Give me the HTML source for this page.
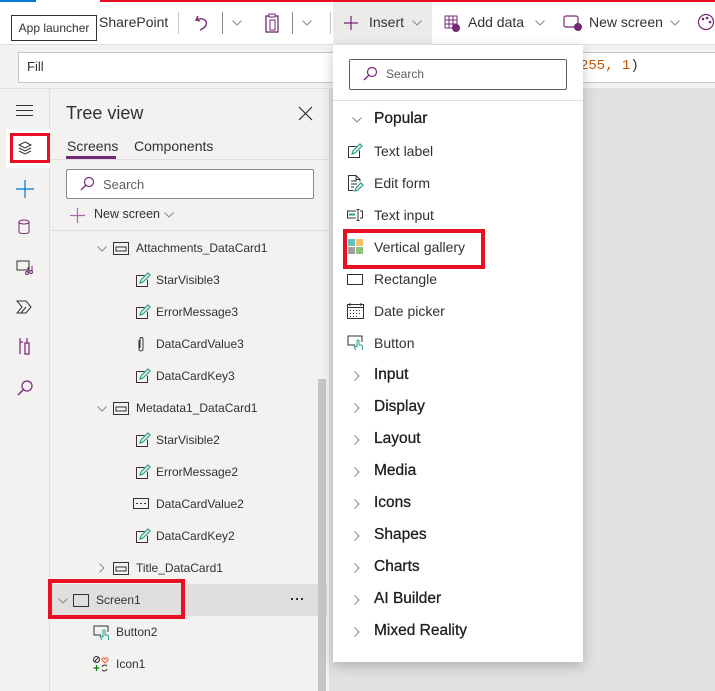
<!DOCTYPE html>
<html><head><meta charset="utf-8"><style>
*{box-sizing:border-box;margin:0;padding:0}
body{width:715px;height:691px;overflow:hidden;position:relative;background:#e1e1e1;font-family:"Segoe UI","Liberation Sans",sans-serif;color:#323130;font-size:13px}
.abs{position:absolute}
.top{left:0;top:0;width:715px;height:45px;background:#fff;border-bottom:1px solid #e1dfdd}
.fbar{left:0;top:45px;width:715px;height:44px;background:#f3f2f1;border-bottom:1px solid #e1dfdd}
.rail{left:0;top:89px;width:50px;height:602px;background:#f3f2f1;border-right:1px solid #e1dfdd}
.tree{left:50px;top:89px;width:280px;height:602px;background:#f3f2f1;border-right:1px solid #e1dfdd}
.row{position:absolute;height:20px;line-height:20px;font-size:12px;color:#323130;white-space:nowrap}
.menu{left:333px;top:45px;width:250px;height:617px;background:#fff;box-shadow:0 4px 12px rgba(0,0,0,.22)}
.mi{position:absolute;left:41px;font-size:14px;line-height:20px;color:#323130}
.mh{position:absolute;left:41px;font-size:15.5px;line-height:20px;color:#201f1e;-webkit-text-stroke:0.3px #201f1e}
.red{position:absolute;border:4px solid #e81123}
svg{position:absolute;overflow:visible}
</style></head><body>
<svg width="0" height="0"><defs>
<symbol id="cd" viewBox="0 0 10 6"><path d="M0.5 0.5L5 5 9.5 0.5" fill="none" stroke="#8a8886" stroke-width="1"/></symbol>
<symbol id="cr" viewBox="0 0 6 10"><path d="M0.5 0.5L5 5 0.5 9.5" fill="none" stroke="#8a8886" stroke-width="1"/></symbol>
<symbol id="pen" viewBox="0 0 16 16"><path d="M1.5 3.5h8M1.5 3.5v11h11v-7" fill="none" stroke="#323130"/><path d="M5 11l1-3 7-7 2 2-7 7z" fill="none" stroke="#2a9d8f" stroke-width="1.2"/></symbol>
<symbol id="card" viewBox="0 0 16 13"><rect x="0.5" y="0.5" width="15" height="12" fill="none" stroke="#323130"/><rect x="3" y="5" width="10" height="4" fill="none" stroke="#323130"/></symbol>
</defs></svg>
<div class="abs" style="left:0;top:0;width:36px;height:2px;background:#0078d4;z-index:5"></div>
<div class="abs" style="left:100px;top:0;width:615px;height:2px;background:#e81123;z-index:5"></div>
<div class="abs top">
 <div class="abs" style="left:11px;top:15px;width:86px;height:26px;border:1px solid #323130;background:#fff;font-size:12px;line-height:24px;text-align:center">App launcher</div>
 <div class="abs" style="left:99px;top:14px;font-size:14px">SharePoint</div>
 <div class="abs" style="left:178px;top:12px;width:1px;height:22px;background:#c8c6c4"></div>
 <svg style="left:194px;top:14px" width="16" height="18"><path d="M4 2 L2 6 L6 7 M2 6 C8 3 14 6 12 11 C11 14 8 15 6 16" fill="none" stroke="#742774" stroke-width="1.4"/></svg>
 <div class="abs" style="left:222px;top:12px;width:1px;height:22px;background:#8a8886"></div>
 <svg style="left:232px;top:20px" width="10" height="6"><use href="#cd"/></svg>
 <svg style="left:264px;top:13px" width="16" height="20"><rect x="2" y="3" width="12" height="16" fill="none" stroke="#742774" stroke-width="1.3"/><rect x="5" y="1" width="6" height="3" fill="#fff" stroke="#742774"/><rect x="6" y="7" width="5" height="10" fill="none" stroke="#742774"/></svg>
 <div class="abs" style="left:292px;top:12px;width:1px;height:22px;background:#8a8886"></div>
 <svg style="left:302px;top:20px" width="10" height="6"><use href="#cd"/></svg>
 <div class="abs" style="left:330px;top:12px;width:1px;height:22px;background:#c8c6c4"></div>
 <div class="abs" style="left:333px;top:2px;width:99px;height:43px;background:#edebe9"></div>
 <svg style="left:344px;top:16px" width="14" height="14"><path d="M7 0v14M0 7h14" stroke="#742774" stroke-width="1.2"/></svg>
 <div class="abs" style="left:369px;top:14px;font-size:14px">Insert</div>
 <svg style="left:412px;top:20px" width="10" height="6"><use href="#cd"/></svg>
 <svg style="left:443px;top:13px" width="18" height="20"><path d="M2 3h12v12H2zM2 7h12M2 11h12M6 3v12M10 3v12" fill="none" stroke="#742774" stroke-width="1"/><circle cx="13" cy="15" r="4" fill="#742774"/></svg>
 <div class="abs" style="left:468px;top:14px;font-size:14px">Add data</div>
 <svg style="left:535px;top:20px" width="10" height="6"><use href="#cd"/></svg>
 <svg style="left:563px;top:14px" width="20" height="18"><rect x="1" y="2" width="14" height="11" rx="2" fill="none" stroke="#742774" stroke-width="1.2"/><circle cx="15" cy="13" r="4" fill="#742774"/></svg>
 <div class="abs" style="left:589px;top:14px;font-size:14px">New screen</div>
 <svg style="left:670px;top:20px" width="10" height="6"><use href="#cd"/></svg>
 <svg style="left:697px;top:13px" width="18" height="18"><circle cx="9" cy="9" r="7.5" fill="none" stroke="#742774" stroke-width="1.2"/><circle cx="6" cy="6" r="1.3" fill="#742774"/><circle cx="10" cy="5" r="1.3" fill="#742774"/><circle cx="13" cy="9" r="1.3" fill="#742774"/></svg>
</div>
<div class="abs fbar">
 <div class="abs" style="left:18px;top:7px;width:697px;height:31px;background:#fff;border:1px solid #c8c6c4;border-right:none"></div>
 <div class="abs" style="left:27px;top:14px;font-size:13px">Fill</div>
 <div class="abs" style="left:580px;top:13px;font-family:'Liberation Mono',monospace;font-size:14px;color:#c45500">255, 1<span style="color:#323130">)</span></div>
</div>
<div class="abs rail">
 <div class="abs" style="left:16px;top:16px;width:17px;height:1px;background:#323130;box-shadow:0 5px 0 #323130,0 10px 0 #323130"></div>
 <div class="abs" style="left:6px;top:40px;width:45px;height:39px;background:#fff"></div>
 <div class="red" style="left:10px;top:44px;width:40px;height:30px;border-width:3px"></div>
 <svg style="left:17px;top:51px" width="16" height="16"><path d="M8 2L14 5 8 8 2 5z M2 8l6 3 6-3 M2 11l6 3 6-3" fill="none" stroke="#323130" stroke-width="1"/></svg>
 <svg style="left:16px;top:91px" width="18" height="18"><path d="M9 0v18M0 9h18" stroke="#0078d4" stroke-width="1.2"/></svg>
 <svg style="left:17px;top:130px" width="14" height="16"><ellipse cx="7" cy="3" rx="5" ry="2" fill="none" stroke="#742774"/><path d="M2 3v10c0 2 10 2 10 0V3" fill="none" stroke="#742774"/></svg>
 <svg style="left:16px;top:170px" width="18" height="16"><rect x="1" y="2" width="12" height="9" fill="none" stroke="#323130"/><path d="M12 8v6M16 7v6" stroke="#742774"/><circle cx="11" cy="14" r="1.5" fill="none" stroke="#742774"/><circle cx="15" cy="13" r="1.5" fill="none" stroke="#742774"/></svg>
 <svg style="left:16px;top:211px" width="18" height="14"><path d="M1 1h9l5 6-5 6H1l5-6z M5 13l5-6" fill="none" stroke="#323130"/></svg>
 <svg style="left:18px;top:248px" width="12" height="18"><path d="M2 1v16M2 5h3M9 1v5M7 6h4v11H7z" fill="none" stroke="#742774" stroke-width="1.2"/></svg>
 <svg style="left:16px;top:290px" width="18" height="18"><circle cx="11" cy="7" r="5" fill="none" stroke="#742774" stroke-width="1.2"/><path d="M7 11L2 16" stroke="#742774" stroke-width="1.4"/></svg>
</div>
<div class="abs tree">
 <div class="abs" style="left:16px;top:14px;font-size:18px;color:#323130">Tree view</div>
 <svg style="left:249px;top:18px" width="13" height="13"><path d="M0 0L13 13M13 0L0 13" stroke="#323130" stroke-width="1.2"/></svg>
 <div class="abs" style="left:17px;top:49px;font-size:14px">Screens</div>
 <div class="abs" style="left:16px;top:67px;width:50px;height:3px;background:#742774"></div>
 <div class="abs" style="left:84px;top:49px;font-size:14px">Components</div>
 <div class="abs" style="left:0;top:70px;width:280px;height:1px;background:#e1dfdd"></div>
 <div class="abs" style="left:16px;top:80px;width:248px;height:30px;background:#fff;border:1px solid #8a8886;border-radius:2px"></div>
 <svg style="left:29px;top:87px" width="16" height="16"><circle cx="10" cy="6" r="4.5" fill="none" stroke="#742774" stroke-width="1.2"/><path d="M7 9L2 14" stroke="#742774" stroke-width="1.3"/></svg>
 <div class="abs" style="left:53px;top:88px;font-size:13px;color:#605e5c">Search</div>
 <svg style="left:20px;top:119px" width="15" height="15"><path d="M7.5 0v15M0 7.5h15" stroke="#a86ba8" stroke-width="1.2"/></svg>
 <div class="abs" style="left:44px;top:118px;font-size:12.5px">New screen</div>
 <svg style="left:114px;top:123px" width="10" height="6"><use href="#cd"/></svg>
 <div class="abs" style="left:0;top:141px;width:280px;height:1px;background:#e1dfdd"></div>
 <div class="abs" style="left:0;top:495px;width:277px;height:32px;background:#e1dfdd"></div>
 <div class="abs" style="left:268px;top:290px;width:8px;height:312px;background:#c8c6c4"></div>
</div>
<svg style="left:97px;top:246px" width="10" height="6"><use href="#cd"/></svg>
<svg style="left:113px;top:242px" width="16" height="13"><use href="#card"/></svg><div class="row" style="left:136px;top:238px">Attachments_DataCard1</div>
<svg style="left:135px;top:272px" width="16" height="16"><use href="#pen"/></svg><div class="row" style="left:156px;top:270px">StarVisible3</div>
<svg style="left:135px;top:304px" width="16" height="16"><use href="#pen"/></svg><div class="row" style="left:156px;top:302px">ErrorMessage3</div>
<svg style="left:138px;top:336px" width="6" height="16"><path d="M1 4v9a2 2 0 0 0 4 0V3a1.5 1.5 0 0 0-3 0v9" fill="none" stroke="#323130"/></svg><div class="row" style="left:156px;top:334px">DataCardValue3</div>
<svg style="left:135px;top:368px" width="16" height="16"><use href="#pen"/></svg><div class="row" style="left:156px;top:366px">DataCardKey3</div>
<svg style="left:97px;top:406px" width="10" height="6"><use href="#cd"/></svg>
<svg style="left:113px;top:402px" width="16" height="13"><use href="#card"/></svg><div class="row" style="left:136px;top:398px">Metadata1_DataCard1</div>
<svg style="left:135px;top:432px" width="16" height="16"><use href="#pen"/></svg><div class="row" style="left:156px;top:430px">StarVisible2</div>
<svg style="left:135px;top:464px" width="16" height="16"><use href="#pen"/></svg><div class="row" style="left:156px;top:462px">ErrorMessage2</div>
<svg style="left:133px;top:498px" width="16" height="11"><rect x="0.5" y="0.5" width="15" height="10" fill="none" stroke="#323130"/><path d="M3 5.5h2M7 5.5h2M11 5.5h2" stroke="#323130"/></svg><div class="row" style="left:156px;top:494px">DataCardValue2</div>
<svg style="left:135px;top:528px" width="16" height="16"><use href="#pen"/></svg><div class="row" style="left:156px;top:526px">DataCardKey2</div>
<svg style="left:99px;top:563px" width="6" height="10"><use href="#cr"/></svg>
<svg style="left:113px;top:562px" width="16" height="13"><use href="#card"/></svg><div class="row" style="left:136px;top:558px">Title_DataCard1</div>
<svg style="left:58px;top:598px" width="10" height="6"><use href="#cd"/></svg>
<div class="abs" style="left:73px;top:594px;width:16px;height:13px;border:1px solid #323130"></div>
<div class="row" style="left:96px;top:590px">Screen1</div>
<div class="abs" style="left:291px;top:598px;width:2px;height:2px;background:#323130;box-shadow:5px 0 0 #323130,10px 0 0 #323130"></div>
<div class="red" style="left:48px;top:579px;width:137px;height:40px"></div>
<svg style="left:93px;top:625px" width="17" height="16"><path d="M8 10H1V1h14v6" fill="none" stroke="#323130"/><path d="M9 15l-2-3 1-1 2 1V6a1 1 0 0 1 2 0v4h2a1.5 1.5 0 0 1 1.5 1.5V15" fill="none" stroke="#2a9d8f"/></svg><div class="row" style="left:116px;top:622px">Button2</div>
<svg style="left:93px;top:656px" width="16" height="16"><circle cx="3.5" cy="3.5" r="3" fill="none" stroke="#323130"/><path d="M1.5 5.5l4-4" stroke="#323130"/><path d="M12 7l-3-3a1.5 1.5 0 0 1 3-1 1.5 1.5 0 0 1 3 1z" fill="none" stroke="#e8632b"/><path d="M3.5 9v6M0.5 12h6" stroke="#107c10" stroke-width="1.2"/><path d="M9 11a3 3 0 0 1 5-1M14 13a3 3 0 0 1-5 1" fill="none" stroke="#323130"/></svg><div class="row" style="left:116px;top:654px">Icon1</div>
<div class="abs menu">
 <div class="abs" style="left:16px;top:14px;width:218px;height:31px;border:1px solid #605e5c;border-radius:2px"></div>
 <svg style="left:29px;top:21px" width="16" height="16"><circle cx="10" cy="6" r="4.5" fill="none" stroke="#742774" stroke-width="1.2"/><path d="M7 9L2 14" stroke="#742774" stroke-width="1.3"/></svg>
 <div class="abs" style="left:53px;top:22px;font-size:12px;color:#605e5c">Search</div>
 <div class="abs" style="left:0;top:55px;width:250px;height:1px;background:#e1dfdd"></div>
 <svg style="left:19px;top:72px" width="10" height="6"><use href="#cd"/></svg><div class="mh" style="top:64px">Popular</div>
 <svg style="left:14px;top:98px" width="16" height="16"><use href="#pen"/></svg><div class="mi" style="top:96px">Text label</div>
 <svg style="left:14px;top:130px" width="16" height="17"><path d="M9 0.5H1.5v15h5M9 0.5l4 4v2M9 0.5v4h4M4 6h6M4 9h6M4 12h3" fill="none" stroke="#323130"/><path d="M8 16l1-3 5-5 2 2-5 5z" fill="none" stroke="#2a9d8f" stroke-width="1.2"/></svg><div class="mi" style="top:128px">Edit form</div>
 <svg style="left:14px;top:164px" width="17" height="12"><path d="M9 2H0.5v7H9M13 2h2.5v7H13M11 0.5v11M9.5 0.5h3M9.5 11.5h3" fill="none" stroke="#323130"/><rect x="2" y="4.5" width="6" height="2" fill="#2a9d8f"/></svg><div class="mi" style="top:160px">Text input</div>
 <div class="abs" style="left:15px;top:194px;width:7px;height:7px;background:#5fbfbf"></div><div class="abs" style="left:23px;top:194px;width:7px;height:7px;background:#f8c06a"></div>
 <div class="abs" style="left:15px;top:202px;width:7px;height:7px;background:#a19f9d"></div><div class="abs" style="left:23px;top:202px;width:7px;height:7px;background:#8cc37a"></div>
 <div class="mi" style="top:192px">Vertical gallery</div>
 <div class="red" style="left:10px;top:184px;width:142px;height:40px"></div>
 <div class="abs" style="left:14px;top:229px;width:16px;height:11px;border:1px solid #323130"></div><div class="mi" style="top:224px">Rectangle</div>
 <svg style="left:14px;top:258px" width="17" height="16"><rect x="0.5" y="1.5" width="16" height="14" fill="none" stroke="#323130"/><path d="M0.5 4.5h16" stroke="#323130"/><path d="M3 0v3M14 0v3" stroke="#323130"/><g fill="#323130"><rect x="3" y="7" width="1" height="1"/><rect x="6" y="7" width="1" height="1"/><rect x="9" y="7" width="1" height="1"/><rect x="12" y="7" width="1" height="1"/><rect x="3" y="10" width="1" height="1"/><rect x="6" y="10" width="1" height="1"/><rect x="9" y="10" width="1" height="1"/><rect x="12" y="10" width="1" height="1"/><rect x="3" y="13" width="1" height="1"/><rect x="6" y="13" width="1" height="1"/><rect x="9" y="13" width="1" height="1"/></g></svg><div class="mi" style="top:256px">Date picker</div>
 <svg style="left:14px;top:290px" width="17" height="16"><path d="M8 10H1V1h14v6" fill="none" stroke="#323130"/><path d="M9 15l-2-3 1-1 2 1V6a1 1 0 0 1 2 0v4h2a1.5 1.5 0 0 1 1.5 1.5V15" fill="none" stroke="#2a9d8f"/></svg><div class="mi" style="top:288px">Button</div>
 <svg style="left:21px;top:326px" width="6" height="10"><use href="#cr"/></svg><div class="mh" style="top:320px">Input</div>
 <svg style="left:21px;top:358px" width="6" height="10"><use href="#cr"/></svg><div class="mh" style="top:352px">Display</div>
 <svg style="left:21px;top:390px" width="6" height="10"><use href="#cr"/></svg><div class="mh" style="top:384px">Layout</div>
 <svg style="left:21px;top:422px" width="6" height="10"><use href="#cr"/></svg><div class="mh" style="top:416px">Media</div>
 <svg style="left:21px;top:454px" width="6" height="10"><use href="#cr"/></svg><div class="mh" style="top:448px">Icons</div>
 <svg style="left:21px;top:486px" width="6" height="10"><use href="#cr"/></svg><div class="mh" style="top:480px">Shapes</div>
 <svg style="left:21px;top:518px" width="6" height="10"><use href="#cr"/></svg><div class="mh" style="top:512px">Charts</div>
 <svg style="left:21px;top:550px" width="6" height="10"><use href="#cr"/></svg><div class="mh" style="top:544px">AI Builder</div>
 <svg style="left:21px;top:582px" width="6" height="10"><use href="#cr"/></svg><div class="mh" style="top:576px">Mixed Reality</div>
</div>
</body></html>
